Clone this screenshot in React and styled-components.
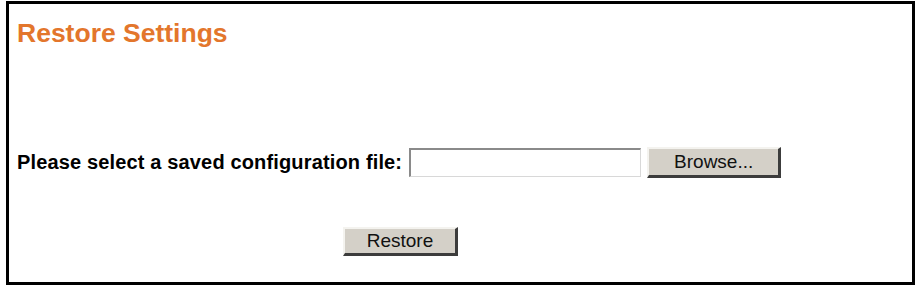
import React from "react";
import styled, { createGlobalStyle } from "styled-components";

const Global = createGlobalStyle`
  html, body { margin: 0; padding: 0; background: #ffffff; }
  body { font-family: "Liberation Sans", Arial, sans-serif; }
`;

const Frame = styled.div`
  box-sizing: border-box;
  width: 909px;
  height: 284px;
  margin: 1px 0 0 6px;
  border: 3px solid #000;
  background: #fff;
  padding: 16px 8px 0 8px;
  display: flex;
  flex-direction: column;
`;

const Title = styled.h1`
  margin: 0;
  font-size: 26.5px;
  line-height: 27px;
  font-weight: bold;
  color: #e3762c;
`;

const Row = styled.div`
  display: flex;
  align-items: center;
  margin-top: 100px;
  height: 31px;
`;

const Label = styled.label`
  font-size: 20px;
  letter-spacing: 0.15px;
  font-weight: bold;
  color: #000;
  margin-right: 7px;
  white-space: nowrap;
`;

const FileBox = styled.div`
  box-sizing: border-box;
  width: 232px;
  height: 29px;
  background: #fff;
  border-top: 2px solid #8a8a8a;
  border-left: 2px solid #8a8a8a;
  border-right: 1px solid #d8d8d8;
  border-bottom: 1px solid #d8d8d8;
  margin-right: 6px;
`;

const Button = styled.button`
  box-sizing: border-box;
  width: ${(p) => p.$w}px;
  height: ${(p) => p.$h}px;
  background: #d4d0c8;
  border-top: 2px solid #f4f3ef;
  border-left: 2px solid #f4f3ef;
  border-right: 3px solid #3c3c3c;
  border-bottom: 3px solid #3c3c3c;
  font-family: "Liberation Sans", Arial, sans-serif;
  font-size: 19px;
  color: #111;
  padding: 0;
  margin: ${(p) => p.$m || 0};
  cursor: pointer;
`;

export default function App() {
  return (
    <>
      <Global />
      <Frame>
        <Title>Restore Settings</Title>
        <Row>
          <Label>Please select a saved configuration file:</Label>
          <FileBox />
          <Button $w={134} $h={31}>Browse...</Button>
        </Row>
        <Button $w={115} $h={29} $m="49px 0 0 326px">Restore</Button>
      </Frame>
    </>
  );
}
